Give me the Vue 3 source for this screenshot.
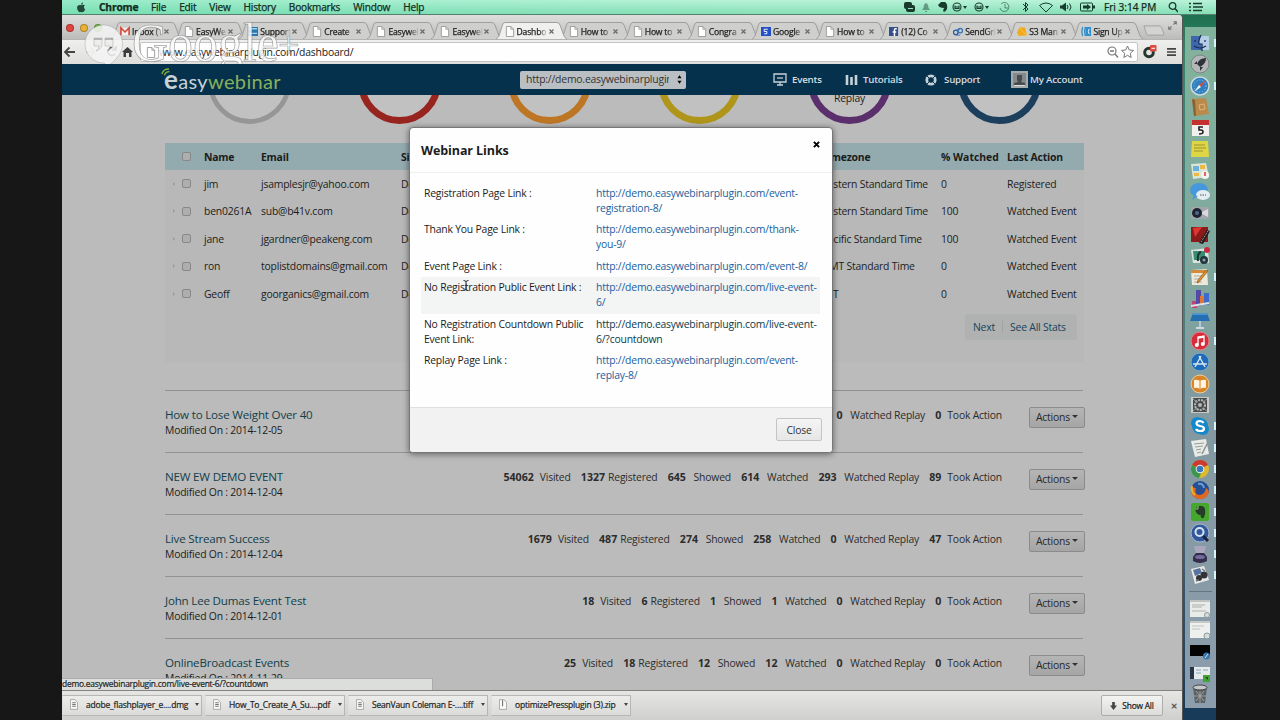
<script setup>
// macOS desktop with a Chrome window: EasyWebinar dashboard and the
// "Webinar Links" dialog on top of it.
const menus = ["File", "Edit", "View", "History", "Bookmarks", "Window", "Help"]

const page = '<path d="M1.5.5h5l3 3v8h-8z" fill="#fff" stroke="#999"/><path d="M6.5.5v3h3" fill="none" stroke="#999"/>'
const tabs = [
	{ label: "Inbox (1", icon: '<path d="M0 2h11v8H0z" fill="#eee"/><path d="M1 10V2l4.500 4.500L10 2v8" fill="none" stroke="#d24a37" stroke-width="1.800"/>' },
	{ label: "EasyWe", icon: page },
	{ label: "Support", icon: '<path d="M0 1h11v10H0z" fill="#2678b4"/><path d="M1 3h9M1 8h9" stroke="#a3d3ed" stroke-width="1.500"/>' },
	{ label: "Create", icon: page },
	{ label: "Easywel", icon: page },
	{ label: "Easywel", icon: page },
	{ label: "Dashbo", icon: page, active: true },
	{ label: "How to", icon: page },
	{ label: "How to", icon: page },
	{ label: "Congra", icon: page },
	{ label: "Google", icon: '<path d="M0 1h11v10H0z" fill="#244fc5"/><path d="M7.500 3.500h-4V6h3v2.500h-3" fill="none" stroke="#fff"/>' },
	{ label: "How to", icon: page },
	{ label: "(12) Co", icon: '<path d="M0 1h10v10H0z" fill="#344f8c"/><path d="M8.500 3H7q-1 0-1 1v7M4 6.500h4" fill="none" stroke="#fff" stroke-width="1.600"/>' },
	{ label: "SendGri", icon: '<circle cx="3" cy="7" r="2.500" fill="none" stroke="#2e5a9b" stroke-width="1.500"/><circle cx="8" cy="5" r="2.500" fill="none" stroke="#3b76b9" stroke-width="1.500"/><path d="M4 4h4M3 10h5" stroke="#3b76b9"/>' },
	{ label: "S3 Man", icon: '<path d="M3 1l6 1 2 8-9 1-2-4z" fill="#f0aa1b"/><path d="M3 1l2 4 6 5" fill="none" stroke="#ffc94b"/>' },
	{ label: "Sign Up", icon: '<path d="M5 1h6v10H5z" fill="#3191cf"/><path d="M2 1Q0 6 2 11M5 1Q3 6 5 11M9 2Q6 6 9 10" fill="none" stroke="#2b84c1" stroke-width="1.300"/><path d="M9 3Q7 6 9 9" fill="none" stroke="#fff"/>' },
]

const rings = [
	{ color: "#969696", faint: true },
	{ color: "#97241f" },
	{ color: "#bd7724" },
	{ color: "#b0951b" },
	{ color: "#5b2f6c", label: "Replay" },
	{ color: "#1d3f5e" },
]

const people = [
	{ name: "jim", email: "jsamplesjr@yahoo.com", zone: "Eastern Standard Time", watched: 0, action: "Registered" },
	{ name: "ben0261A", email: "sub@b41v.com", zone: "Eastern Standard Time", watched: 100, action: "Watched Event" },
	{ name: "jane", email: "jgardner@peakeng.com", zone: "Pacific Standard Time", watched: 100, action: "Watched Event" },
	{ name: "ron", email: "toplistdomains@gmail.com", zone: "GMT Standard Time", watched: 0, action: "Watched Event" },
	{ name: "Geoff", email: "goorganics@gmail.com", zone: "EST", watched: 0, action: "Watched Event" },
]

const statNames = ["Visited", "Registered", "Showed", "Watched", "Watched Replay", "Took Action"]
const events = [
	{ title: "How to Lose Weight Over 40", date: "2014-12-05", stats: [0, 0, 0, 0, 0, 0] },
	{ title: "NEW EW DEMO EVENT", date: "2014-12-04", stats: [54062, 1327, 645, 614, 293, 89] },
	{ title: "Live Stream Success", date: "2014-12-04", stats: [1679, 487, 274, 258, 0, 47] },
	{ title: "John Lee Dumas Event Test", date: "2014-12-01", stats: [18, 6, 1, 1, 0, 0] },
	{ title: "OnlineBroadcast Events", date: "2014-11-29", stats: [25, 18, 12, 12, 0, 0] },
]

const host = "http://demo.easywebinarplugin.com/"
const links = [
	{ label: ["Registration Page Link :"], url: [host + "event-", "registration-8/"] },
	{ label: ["Thank You Page Link :"], url: [host + "thank-", "you-9/"] },
	{ label: ["Event Page Link :"], url: [host + "event-8/"] },
	{ label: ["No Registration Public Event Link :"], url: [host + "live-event-", "6/"], striped: true },
	{ label: ["No Registration Countdown Public", "Event Link:"], url: [host + "live-event-", "6/?countdown"], hover: true },
	{ label: ["Replay Page Link :"], url: [host + "event-", "replay-8/"] },
]

const downloads = [
	"adobe_flashplayer_e....dmg",
	"How_To_Create_A_Su....pdf",
	"SeanVaun Coleman E-....tiff",
	"optimizePressplugin (3).zip",
]

// Dock icons, drawn on a 20x20 grid
const dock = [
	{ run: true, art: '<path d="M1 3h18v14H1z" fill="#3f67ad"/><path d="M11 3h8v14h-7l-1-6H9q0-5 2-8z" fill="#b5cde5"/><path d="M11 2q-3 6-2 9h3v7M5 7v2M15 7v2M4 13q6 4 12 0" fill="none" stroke="#16294f" stroke-width="1.200"/>' },
	{ art: '<circle cx="10" cy="10" r="9" fill="#b4b6b8" stroke="#7d8386"/><path d="M16 4q-7 0-9 6l3 3q6-3 6-9M7 10H4l3-3M10 13v4l3-4" fill="#303338"/>' },
	{ run: true, art: '<circle cx="10" cy="10" r="9" fill="#2f80c1" stroke="#cdd8df" stroke-width="1.500"/><circle cx="10" cy="10" r="6" fill="none" stroke="#9dcbe8" stroke-dasharray="1 2"/><path d="M16 4l-5 7-2-2z" fill="#da4b3c"/><path d="M4 16l5-7 2 2z" fill="#f2f5f7"/>' },
	{ art: '<path d="M2 2l14-1 3 16-15 2z" fill="#ba8a4d"/><path d="M2 2l3 1 1 16-2 0z" fill="#8a6030"/><path d="M9 8l5-1 1 5-5 1z" fill="none" stroke="#dab676"/>' },
	{ art: '<path d="M2 2h17v16H2z" fill="#f2f0ee"/><path d="M2 2h17v5H2z" fill="#c4302d"/><path d="M13 9H9v3h2q2 0 2 2t-4 2" fill="none" stroke="#222" stroke-width="1.600"/>' },
	{ art: '<path d="M2 2h16l1 16H1z" fill="#dfd646"/><path d="M4 6h11M4 9h12M4 12h9" stroke="#9b9130"/>' },
	{ art: '<path d="M1 3l15-1 3 14-16 2z" fill="#d8e5d7"/><path d="M3 5h6v5H3z" fill="#6db0dc"/><path d="M10 4h5v4h-5zM4 12h5v3H4z" fill="#efb840"/><circle cx="15" cy="14" r="4" fill="#f2f2f2"/><path d="M15 11v4" stroke="#d33" stroke-width="1.500"/>' },
	{ art: '<ellipse cx="9" cy="8" rx="9" ry="7" fill="#4598dc"/><ellipse cx="13" cy="13" rx="7" ry="5" fill="#e3edf3"/><path d="M4 13l-2 5 6-4" fill="#4598dc"/><path d="M10 13h6" stroke="#888" stroke-width="1.500" stroke-dasharray="1.500 1"/>' },
	{ art: '<rect x="1" y="4" width="18" height="12" rx="2" fill="#a1a6ad"/><circle cx="7" cy="10" r="5" fill="#1e2430"/><circle cx="7" cy="10" r="2" fill="#51688b"/><path d="M12 9l6-3v8l-6-3" fill="#d8dadd"/>' },
	{ art: '<path d="M1 2h17v15H1z" fill="#8b1a19"/><path d="M3 3l9-1-7 10z" fill="#dd3730"/><path d="M9 18l8-13 3 1-7 13z" fill="#241e20"/><path d="M11 17l7-11" stroke="#bbb" stroke-dasharray="1 1"/>' },
	{ art: '<path d="M1 4l17-2 1 15H3z" fill="#dce3dd"/><path d="M3 5h12v9H4z" fill="#398c75"/><path d="M8 15q-1-8 3-9" stroke="#143a30" stroke-width="2" fill="none"/><circle cx="17" cy="4" r="3" fill="#c82b41"/><circle cx="14" cy="14" r="4" fill="#26343b"/><circle cx="14" cy="14" r="1.500" fill="#79a8ae"/>' },
	{ run: true, art: '<path d="M1 3l16-1 1 16H2z" fill="#eee8d8"/><path d="M1 3h16v3H1z" fill="#d48a36"/><path d="M4 9h10M4 12h8M4 15h8" stroke="#b0aca3"/><path d="M18 4L9 15l-2 1 1-3 8-10z" fill="#e59226" stroke="#6f4b26" stroke-width=".6"/>' },
	{ art: '<path d="M2 12h5v7H2z" fill="#ba4579"/><path d="M6 1h5v16H6z" fill="#5648a6"/><path d="M10 7h4v9h-4z" fill="#df7536"/><path d="M14 4h5v12h-5z" fill="#3c6bc9"/><path d="M1 17l18-3" stroke="#dce2e5" stroke-width="2"/>' },
	{ art: '<path d="M3 3h14l3 8H0z" fill="#2570b2"/><path d="M3 4h14" stroke="#7bbce8"/><path d="M10 11v6" stroke="#b0c8d7" stroke-width="2"/><path d="M6 18h8" stroke="#e5eef2" stroke-width="1.500"/>' },
	{ run: true, art: '<circle cx="10" cy="10" r="9" fill="#d82c3a" stroke="#e88087"/><path d="M8 14V6l6-1v8M8 7l6-1" fill="none" stroke="#fff" stroke-width="1.300"/><circle cx="6.800" cy="14" r="2" fill="#fff"/><circle cx="12.800" cy="13" r="2" fill="#fff"/>' },
	{ art: '<circle cx="10" cy="10" r="9" fill="#1d6bb8" stroke="#7fa6c8"/><path d="M5 15l6-11M15 15L9 4M3 12h14" stroke="#d7e7f2" stroke-width="1.400"/>' },
	{ art: '<circle cx="10" cy="10" r="9" fill="#da8428" stroke="#ecd0a0"/><path d="M4 6q3-1 6 1 3-2 6-1v8q-3-1-6 1-3-2-6-1z" fill="#fff3df"/><path d="M10 7v8" stroke="#da8428"/>' },
	{ art: '<path d="M1 2h18v16H1z" fill="#c9cac8"/><path d="M3 3h14v14H3z" fill="#474b4c"/><circle cx="10" cy="10" r="5" fill="none" stroke="#b5b8b8" stroke-width="2" stroke-dasharray="2 1"/><circle cx="10" cy="10" r="2" fill="#b5b8b8"/><path d="M3 4l4 3M17 4l-4 3M3 16l4-3M17 16l-4-3" stroke="#999"/>' },
	{ run: true, art: '<circle cx="7" cy="7" r="6" fill="#1488cb"/><circle cx="13" cy="13" r="6" fill="#1488cb"/><circle cx="10" cy="10" r="8" fill="#1488cb"/><path d="M13.500 7q-1-2-4-2-3 .3-3 2.300T10 10q4 .5 4 2.700T10.500 15 6 13" fill="none" stroke="#fff" stroke-width="2.200"/>' },
	{ run: true, art: '<path d="M1 3l15-2 3 15-14 3z" fill="#e9ebe7"/><path d="M4 6l10-1M5 9l8-1M6 12l5-1M7 15l4-1" stroke="#949d99"/><path d="M18 4l-6 12" stroke="#8c9294" stroke-width="1.500"/>' },
	{ run: true, art: '<circle cx="10" cy="10" r="9" fill="#ddb92d"/><path d="M10 10L2 6A9 9 0 0 1 18 6z" fill="#cd3b30"/><path d="M2 6a9 9 0 0 0 7 13l3-7z" fill="#39984b"/><circle cx="10" cy="10" r="4.300" fill="#eee"/><circle cx="10" cy="10" r="3.300" fill="#3977bd"/>' },
	{ run: true, art: '<circle cx="10" cy="10" r="9" fill="#274d93"/><path d="M2 5q0 3 4 3-2 6 3 7 6 0 7-7 4 2 2 7-4 5-9 4-8-1-8-9z" fill="#df6922"/><path d="M2 6q-1 6 3 9" fill="none" stroke="#edaf31" stroke-width="2"/><path d="M8 4q5-1 6 4" stroke="#6a9bd2" stroke-width="2" fill="none"/>' },
	{ run: true, art: '<rect x="1" y="1" width="18" height="18" rx="2" fill="#45a72c"/><path d="M5 7l3-3h4q4 1 3 8-1 5-3 4t-1-3q-5 0-6-6z" fill="#283a2b"/><path d="M5 7h3V4" fill="none" stroke="#8cca7d"/>' },
	{ run: true, art: '<circle cx="10" cy="10" r="9" fill="#32599b" stroke="#a4b6d1"/><circle cx="9.500" cy="9" r="4" fill="none" stroke="#d4e4f4" stroke-width="2"/><path d="M13 13l5 5" stroke="#1b2440" stroke-width="3"/>' },
	{ run: true, art: '<path d="M4 2h12l-2 8H6z" fill="#aaa7bd"/><path d="M6 9h8l3 4v4q-7 4-14 0v-4z" fill="#342d4b"/><ellipse cx="10" cy="13" rx="5" ry="2" fill="#756aa0"/>' },
	{ run: true, art: '<path d="M1 4l13-3 5 14-14 4z" fill="#e8e9e7"/><path d="M3 5l7-2 2 5-7 3z" fill="#5874a0"/><circle cx="9" cy="13" r="3" fill="#343338"/><circle cx="14" cy="10" r="3.500" fill="#343338"/><path d="M12 4l3 2M6 16l3-1" stroke="#777" stroke-width="1.500"/>' },
]
const thumbs = [
	'<path d="M0 1h20v17H0z" fill="#e8ebe8"/><path d="M0 1h20v2H0z" fill="#bfc4c3"/><path d="M2 6h13M2 8h10M2 12h14" stroke="#adb1ad"/><circle cx="17" cy="16" r="2.500" fill="#d6dddd" stroke="#8d9899"/>',
	'<path d="M0 1h20v17H0z" fill="#edf0ed"/><path d="M0 1h20v2H0z" fill="#c4c9c8"/><path d="M2 6h12M2 9h8" stroke="#bfc4bf"/><circle cx="17" cy="16" r="3" fill="#d6dddd" stroke="#8d9899"/>',
	'<path d="M0 4h20v11H0z" fill="#030405"/><circle cx="16.500" cy="15" r="3.500" fill="#3876ad"/><path d="M15 17l3-4" stroke="#ddd"/>',
	'<path d="M0 4h20v12H0z" fill="#e6eaea"/><path d="M0 4h4v12H0z" fill="#253746"/><path d="M6 7h5M6 10h5M13 7h5" stroke="#85a8c2"/><path d="M13 12h7v7h-7z" fill="#43a437"/><path d="M15 14h3v3z" fill="#204c22"/>',
	'<path d="M3 3h14l-2 16H5z" fill="#5d6264"/><ellipse cx="10" cy="3.500" rx="7" ry="2.500" fill="#c4c8c9" stroke="#444"/><path d="M6 7l8 10M14 7L6 17M10 7v12M4 12h12" stroke="#a8adaf" stroke-width=".8"/>',
]
</script>

<template>
	<div class="stage">
		<div class="screen">
			<div class="menubar">
				<svg class="apple" viewBox="0 0 12 12"><path d="M6 3.300C4 2.300 1.300 3 1.300 6c0 3 2 6 3.500 5.600.8-.3 1.400-.3 2.200 0C8.700 12 10.600 9.500 11 8c-2-1-2-3.500-.3-4.300C9.500 2.300 7.500 2.700 6 3.300zM6 2.800C6 1.300 7 .3 8.300 0 8.500 1.500 7.500 2.700 6 2.800z" /></svg>
				<b class="app-name">Chrome</b>
				<span v-for="m in menus" :key="m" class="menu">{{ m }}</span>
				<div class="tray">
					<svg width="176" height="14" viewBox="0 0 176 14">
						<g fill="#173b2c">
							<rect x="0" y="2" width="8" height="7" rx="2" /><rect x="2" y="5" width="9" height="7" rx="2" /><path d="M4 8.500h5" stroke="#9be5c4" />
							<path d="M18 10q2-2 2-5 1-2 2-2t2 2q0 3 2 5zM21 11h2v1h-2z" opacity=".45" />
							<path d="M34 5l3-3h4q3 2 2 7-2 4-4 2l1-3q-5 0-6-3z" />
						</g>
						<g fill="none" stroke="#173b2c" stroke-width="1.100">
							<circle cx="53" cy="7" r="4" /><path d="M51 5.500v3h4v-3M51 7h4" />
							<circle cx="75" cy="7" r="4" /><path d="M73 5.500v3h4v-3M73 7h4" />
							<path d="M97 4a4.500 4.500 0 1 1-1 4M101 4v4h3" opacity=".55" stroke-width="1" />
							<path d="M119 4l5 5-2.500 2.500v-9L124 5l-5 5" stroke-width="1" />
							<path d="M135.500 5.500q6.500-5 13 0L142 12z" stroke-width="1" />
							<path d="M163 5q2 2 0 4M165.500 3.500q3 3.500 0 7" stroke-width="1" />
						</g>
						<path d="M59 6h4l-2 3zM81 6h4l-2 3zM156 5.500h2l4-3v9l-4-3h-2z" fill="#173b2c" />
					</svg>
					<svg class="battery" width="15" height="14" viewBox="0 0 15 14"><rect x=".5" y="3" width="12" height="8" rx="1" fill="none" stroke="#173b2c" /><path d="M13 5.500h2v3h-2zM3 5.500h4V4l4 3-4 3V8.500H3z" fill="#173b2c" /></svg>
					<span class="clock">Fri 3:14 PM</span>
					<svg class="lens" width="10" height="12" viewBox="0 0 10 12"><circle cx="4.500" cy="5" r="3.300" fill="none" stroke="#173b2c" stroke-width="1.300" /><path d="M7 7.500l3 3.500" stroke="#173b2c" stroke-width="1.500" /></svg>
					<svg width="14" height="10" viewBox="0 0 14 10"><path d="M0 1.500h2M4 1.500h9M0 5h2M4 5h10M0 8.500h2M4 8.500h9" stroke="#173b2c" stroke-width="1.700" /></svg>
				</div>
			</div>

			<div class="desktop">
				<div class="browser">
					<div class="tabstrip">
						<div class="lights"><i class="red"></i><i class="yellow"></i><i class="green"></i></div>
						<div v-for="(t, i) in tabs" :key="i" class="tab" :class="{ active: t.active }">
							<svg class="tab-shape" viewBox="0 0 71 17"><path d="M0 17Q2 16 3 14L6.500 3Q7 .5 9 .5H61Q63 .5 64 3L68 14Q69 16 71 17" /></svg>
							<svg class="favicon" viewBox="0 0 11 12" v-html="t.icon"></svg>
							<span class="tab-label">{{ t.label }}</span>
							<svg class="tab-close" viewBox="0 0 5 5"><path d="M.5.500l4 4M4.500.500l-4 4" stroke="#666" stroke-width="1.100" /></svg>
						</div>
						<svg class="new-tab" viewBox="0 0 24 12"><path d="M1 1h17q1 0 2 1l3 8q0 1-1 1H6q-1 0-2-1z" fill="#d3d3d1" stroke="#a0a0a0" /></svg>
						<svg class="fullscreen" viewBox="0 0 10 10"><path d="M6 .8h3.200V4M9 1L6 4M4 9.200H.8V6M1 9l3-3" fill="none" stroke="#777" stroke-width="1.300" /></svg>
					</div>

					<div class="toolbar">
						<svg class="nav" viewBox="0 0 72 20">
							<path d="M13 10H3.500M7.500 5.500L3 10l4.500 4.500" fill="none" stroke="#444" stroke-width="1.800" />
							<path d="M24 10h9M29 6l4 4-4 4" fill="none" stroke="#c2c2c2" stroke-width="1.800" />
							<path d="M53 7a4 4 0 1 0 0 5M54 4v4h-4" fill="none" stroke="#555" stroke-width="1.700" />
							<path d="M60 10l5.500-5 5.500 5h-1.500v5H67v-4h-3v4h-2.500v-5z" fill="#3c3c3c" />
						</svg>
						<div class="omnibox">
							<svg class="site-icon" viewBox="0 0 11 12" v-html="page"></svg>
							<span class="address">www.easywebinarplugin.com/dashboard/</span>
							<svg class="omni-icons" viewBox="0 0 28 14">
								<circle cx="5" cy="6" r="4" fill="none" stroke="#777" stroke-width="1.200" /><path d="M8 9l3 3.500M3 6h4" stroke="#777" stroke-width="1.300" />
								<path d="M20.500 1l1.800 4 4.200.4-3.200 2.900.9 4.200-3.700-2.200-3.700 2.200.9-4.200L14.500 5.400l4.200-.4z" fill="#fff" stroke="#777" />
							</svg>
						</div>
						<svg class="ext" viewBox="0 0 14 14"><circle cx="6" cy="7.500" r="4.300" fill="none" stroke="#25382f" stroke-width="3" /><rect x="7" y="0" width="6.500" height="6.500" rx="1" fill="#dc4a42" /><path d="M8.500 3.300h3.500" stroke="#fff" /></svg>
						<svg class="burger" viewBox="0 0 10 10"><path d="M0 1.500h10M0 5h10M0 8.500h10" stroke="#444" stroke-width="1.900" /></svg>
					</div>

					<div class="page">
						<div class="site-header">
							<div class="logo">
								<svg viewBox="0 0 10 9"><path d="M1 6Q2 1 8 1M3.500 7.500Q4 4 8.500 3.500" fill="none" stroke="#7eab3f" stroke-width="1.500" /></svg>
								<b>e</b>asy<em>webinar</em>
							</div>
							<div class="site-select"><span>http://demo.easywebinarplugin</span><svg viewBox="0 0 6 10"><path d="M3 0l2.500 3.500h-5zM3 10L.5 6.500h5z" /></svg></div>
							<div class="site-nav">
								<a class="n-events"><svg width="14" height="13" viewBox="0 0 14 13"><path d="M1 1h12v8H1zM4 12h6M7 9v3" fill="none" stroke="#c7d2d8" stroke-width="1.300" /><path d="M4 4h6v2H4z" fill="#7f98a8" /></svg>Events</a>
								<a class="n-tutorials"><svg width="13" height="12" viewBox="0 0 13 12"><path d="M2 1v10M6.500 3v8M11 1v10" stroke="#c7d2d8" stroke-width="2.600" /></svg>Tutorials</a>
								<a class="n-support"><svg width="12" height="12" viewBox="0 0 12 12"><circle cx="6" cy="6" r="4.200" fill="none" stroke="#c7d2d8" stroke-width="2.800" /><path d="M2 2l2.500 2.500M10 2L7.500 4.500M2 10l2.500-2.500M10 10L7.500 7.500" stroke="#0a3250" /></svg>Support</a>
								<a class="n-account"><svg width="17" height="17" viewBox="0 0 17 17"><path d="M0 0h17v17H0z" fill="#a5aaad" /><path d="M2 2h13v13H2z" fill="#85898b" /><path d="M6 4h5v5l-1 2 4 1v2H3v-2l4-1-1-2z" fill="#494c4d" /><path d="M3 14.500h11" stroke="#ddd" /></svg>My Account</a>
							</div>
						</div>

						<div class="rings">
							<div v-for="(r, i) in rings" :key="i" class="ring" :class="{ faint: r.faint }" :style="{ borderColor: r.color }">{{ r.label }}</div>
						</div>

						<div class="people">
							<div class="person head">
								<span class="pick"><i class="box"></i></span><span>Name</span><span>Email</span><span>Simulated</span><span>Timezone</span><span class="wide">% Watched</span><span>Last Action</span>
							</div>
							<div v-for="p in people" :key="p.name" class="person">
								<span class="pick"><i class="arrow"></i><i class="box"></i></span><span>{{ p.name }}</span><span>{{ p.email }}</span><span>December 5</span><span>{{ p.zone }}</span><span>{{ p.watched }}</span><span>{{ p.action }}</span>
							</div>
							<div class="pager"><a>Next</a><i></i><a>See All Stats</a></div>
						</div>

						<div class="events">
							<div v-for="e in events" :key="e.title" class="event">
								<div class="event-info">
									<a class="event-title">{{ e.title }}</a>
									<div class="event-date">Modified On : {{ e.date }}</div>
								</div>
								<div class="stats">
									<span v-for="(s, i) in e.stats" :key="i" class="stat" :class="'stat-' + i"><b>{{ s }}</b><span>{{ statNames[i] }}</span></span>
								</div>
								<button class="actions">Actions<i></i></button>
							</div>
						</div>
						<div class="status">demo.easywebinarplugin.com/live-event-6/?countdown</div>
					</div>

					<div class="downloads">
						<div v-for="(d, i) in downloads" :key="d" class="download">
							<svg viewBox="0 0 9 12"><path d="M.5.5h5l3 3v8h-8z" fill="#f8f8f8" stroke="#a2a2a2" /><path :d="i === 3 ? 'M4 1v7' : 'M2.500 4h4M2.500 6h4M2.500 8h4'" stroke="#777" stroke-width="1.300" /></svg>
							<span>{{ d }}</span><i></i>
						</div>
						<button class="show-all"><svg viewBox="0 0 8 9"><path d="M2.500 0h3v4H8L4 9 0 4h2.500z" fill="#444" /></svg>Show All</button>
						<span class="dismiss">×</span>
					</div>
				</div>

				<div class="dock">
					<div v-for="(d, i) in dock" :key="i" class="dock-item" :class="{ running: d.run }"><svg viewBox="0 0 20 20" v-html="d.art"></svg></div>
					<hr>
					<div v-for="(t, i) in thumbs" :key="'t' + i" class="dock-item"><svg viewBox="0 0 20 20" v-html="t"></svg></div>
				</div>
			</div>
		</div>

		<div class="modal">
			<div class="modal-head"><b>Webinar Links</b><svg viewBox="0 0 8 8"><path d="M1 1l6 6M7 1L1 7" stroke="#000" stroke-width="2.200" /></svg></div>
			<div class="modal-body">
				<div v-for="l in links" :key="l.label[0]" class="link-row" :class="{ striped: l.striped, hover: l.hover }">
					<div><div v-for="t in l.label" :key="t">{{ t }}</div></div>
					<a><div v-for="t in l.url" :key="t">{{ t }}</div></a>
				</div>
			</div>
			<div class="modal-foot"><button>Close</button></div>
			<svg class="cursor" viewBox="0 0 6 11"><path d="M.5.500Q3 .5 3 2v7q0 1.500-2.500 1.500M5.500.500Q3 .5 3 2M3 9q0 1.500 2.500 1.500" fill="none" stroke="#333" /></svg>
		</div>

		<svg class="watermark" viewBox="0 0 226 56">
			<path class="bubble" fill-rule="evenodd" d="M19.500 0a19 19 0 0 1 19 19c0 10-8 18-18 24v-5A19 19 0 0 1 19.500 0zM10 13v8h5q0 3-3 5 6-2 6-7v-6zM21 13v8h5q0 3-3 5 6-2 6-7v-6z" />
			<text x="48" y="36" textLength="147" lengthAdjust="spacingAndGlyphs">Google</text>
			<text x="194" y="33" class="plus">+</text>
		</svg>
	</div>
</template>

<style>
body {
	margin: 0;
	background: #171717;
}
</style>

<style scoped>
.stage {
	position: relative;
	width: 1280px;
	height: 720px;
	overflow: hidden;
	background: #171717;
	font-family: "Open Sans", "Noto Sans", sans-serif;
	font-size: 10.4px;
	letter-spacing: -0.2px;
	color: #1c1c1c;
}
.stage * {
	box-sizing: border-box;
}
.stage svg {
	flex: none;
}
.stage button {
	font-family: inherit;
	letter-spacing: inherit;
	padding: 0;
}
.screen {
	width: 1154px;
	height: 720px;
	margin-left: 62px;
	display: flex;
	flex-direction: column;
	overflow: hidden;
}

/* menu bar */
.menubar {
	height: 15px;
	flex: none;
	display: flex;
	align-items: center;
	padding: 0 13px 0 14px;
	background: linear-gradient(90deg, rgba(90, 220, 170, 0.35), transparent 60%), linear-gradient(#b9f3d8, #87dfb7);
	border-bottom: 1px solid #54806d;
	font-size: 10.1px;
	letter-spacing: -0.2px;
	color: #122b20;
	-webkit-text-stroke: 0.25px #122b20;
	white-space: nowrap;
}
.apple {
	width: 10px;
	height: 11px;
	margin-right: 13px;
	fill: #23493a;
}
.app-name {
	width: 52px;
	font-size: 10.3px;
}
.menu {
	margin-right: 13px;
}
.tray {
	margin-left: auto;
	display: flex;
	align-items: center;
}
.battery {
	margin: 0 9px 0 0;
}
.clock {
	width: 53px;
	margin-right: 11px;
	letter-spacing: 0;
}
.lens {
	margin-right: 11px;
}

.desktop {
	flex: 1;
	min-height: 0;
	display: flex;
	background: linear-gradient(#1d7050, #35866d 40px, #597986 420px, #183b5a 690px);
}
.browser {
	width: 1121px;
	display: flex;
	flex-direction: column;
	border-radius: 0 4px 0 0;
	overflow: hidden;
	border-right: 1px solid #555;
	background: #dcdcdc;
}

/* tabs */
.tabstrip {
	height: 25px;
	flex: none;
	display: flex;
	align-items: flex-end;
	background: linear-gradient(#dededd, #bcbcba);
	border-bottom: 1px solid #b5b5b5;
}
.lights {
	width: 49px;
	display: flex;
	gap: 6px;
	padding: 0 0 7px 4px;
}
.lights i {
	width: 8px;
	height: 8px;
	border-radius: 50%;
	border: 1px solid rgba(0, 0, 0, 0.25);
}
.red { background: #e2453f; }
.yellow { background: #eab134; }
.green { background: #7cbc4d; }
.tab {
	position: relative;
	width: 64.1px;
	height: 17px;
	flex: none;
	display: flex;
	align-items: center;
	padding: 2px 0 0 9px;
	font-size: 8.6px;
	color: #222;
	-webkit-text-stroke: 0.25px #222;
}
.tab-shape {
	position: absolute;
	left: 0;
	top: 0;
	width: 71px;
	height: 17px;
	overflow: visible;
}
.tab-shape path {
	fill: #cfcfcd;
	stroke: #989896;
	stroke-width: 0.9;
}
.tab.active {
	z-index: 1;
}
.tab.active .tab-shape path {
	fill: #f0f0ef;
}
.favicon {
	position: relative;
	width: 10px;
	height: 11px;
	margin-right: 2px;
}
.tab-label {
	position: relative;
	width: 31px;
	overflow: hidden;
	white-space: nowrap;
	mask-image: linear-gradient(90deg, #000 70%, transparent);
}
.tab-close {
	position: relative;
	width: 5px;
	height: 5px;
	margin-left: 1px;
}
.new-tab {
	width: 22px;
	height: 11px;
	margin: 0 0 3px 6px;
}
.fullscreen {
	width: 9px;
	height: 9px;
	margin: 0 0 9px 3px;
}

/* toolbar */
.toolbar {
	height: 24px;
	flex: none;
	display: flex;
	align-items: center;
	background: linear-gradient(#efefee, #dededd);
}
.nav {
	width: 72px;
	height: 20px;
	margin-right: 6px;
}
.omnibox {
	width: 998px;
	height: 20px;
	display: flex;
	align-items: center;
	padding: 0 2px 0 5px;
	background: #fdfefd;
	border: 1px solid #c4c4c4;
	border-radius: 2px;
}
.site-icon {
	width: 10px;
	height: 11px;
	margin-right: 3px;
}
.address {
	font-size: 10.4px;
	color: #222;
}
.omni-icons {
	width: 28px;
	height: 14px;
	margin-left: auto;
}
.ext {
	width: 14px;
	height: 14px;
	margin-left: 5px;
}
.burger {
	width: 9px;
	height: 10px;
	margin-left: 10px;
}

/* page, dimmed behind the dialog */
.page {
	position: relative;
	flex: 1;
	min-height: 0;
	overflow: hidden;
	background: #bbb;
}
.site-header {
	position: relative;
	z-index: 1;
	height: 31px;
	display: flex;
	align-items: center;
	background: #06314d;
	color: #d5dde2;
}
.logo {
	display: flex;
	align-items: baseline;
	width: 359px;
	margin-left: 99px;
	font-family: Lato, sans-serif;
	font-size: 20px;
	line-height: 28px;
	letter-spacing: 0.35px;
	color: #c6d2d6;
}
.logo svg {
	width: 10px;
	height: 9px;
	margin-right: -7px;
	align-self: flex-start;
	margin-top: 3px;
}
.logo b {
	font-size: 26px;
}
.logo em {
	font-style: normal;
	color: #87b05a;
}
.site-select {
	width: 166px;
	height: 18px;
	display: flex;
	align-items: center;
	justify-content: space-between;
	padding: 0 4px 1px 6px;
	border-radius: 2px;
	background: #b9bfc2;
	color: #333;
}
.site-select span {
	width: 143px;
	overflow: hidden;
	white-space: nowrap;
}
.site-select svg {
	width: 5px;
	height: 9px;
}
.site-nav {
	display: flex;
	margin-left: 87px;
	font-size: 9.7px;
	font-weight: 600;
	white-space: nowrap;
}
.site-nav a {
	display: flex;
	align-items: center;
	gap: 5px;
}
.n-events { width: 72px; }
.n-tutorials { width: 80px; }
.n-support { width: 86px; }
.site-nav .n-support { gap: 7px; }
.site-nav .n-account { gap: 2px; }

.rings {
	height: 48px;
	display: flex;
	gap: 67px;
	padding-left: 146px;
}
.ring {
	width: 83px;
	height: 83px;
	flex: none;
	margin-top: -54px;
	padding-top: 43px;
	border: 7.5px solid;
	border-radius: 50%;
	background: #c1c1c1;
	line-height: 15px;
	text-align: center;
}
.ring.faint {
	border-width: 5px;
}

.people {
	width: 919px;
	height: 219px;
	margin-left: 103px;
	background: #b8b8b8;
}
.person {
	display: grid;
	grid-template-columns: 39px 57px 140px 421px 119px 66px 77px;
	align-items: center;
	height: 27.5px;
	white-space: nowrap;
}
.person.head {
	height: 27px;
	background: #93aaae;
	font-weight: 700;
}
.person .wide {
	letter-spacing: 0;
}
.pick {
	display: flex;
	align-items: center;
	justify-content: flex-end;
	padding-right: 13px;
}
.box {
	width: 9px;
	height: 9px;
	border: 1px solid #888;
	border-radius: 2px;
	background: #aeaeae;
}
.arrow {
	margin-right: 7px;
	border: 2.5px solid transparent;
	border-left-color: #999;
	border-right-width: 0;
}
.pager {
	display: flex;
	align-items: center;
	width: 112px;
	height: 26px;
	margin: 6px 0 0 800px;
	padding: 0 8px;
	background: #b0b1b1;
	border-radius: 3px;
	color: #174460;
	white-space: nowrap;
}
.pager i {
	width: 1px;
	height: 12px;
	margin: 0 7px;
	background: #a2a2a2;
}

.events {
	width: 920px;
	margin: 28px 0 0 103px;
}
.event {
	display: flex;
	height: 62px;
	padding-top: 16px;
	background: linear-gradient(#929292, #929292) no-repeat 0 0 / 918px 1px;
	white-space: nowrap;
}
.event-title {
	display: block;
	font-size: 11.6px;
	line-height: 17px;
	color: #123f4a;
}
.event-date {
	line-height: 15px;
}
.stats {
	margin-left: auto;
	margin-right: 27px;
	padding-top: 1px;
	display: flex;
	gap: 10.2px;
	line-height: 17px;
	color: #2c2c2c;
}
.stat b {
	margin-right: 6px;
	font-size: 10.6px;
	letter-spacing: 0;
}
.stat-1 b { margin-right: 3px; }
.stat-2 b,
.stat-3 b,
.stat-4 b { margin-right: 7.7px; }
.actions {
	width: 56px;
	height: 21px;
	margin-top: 0.5px;
	border: 1px solid #8b8b8b;
	border-radius: 2px;
	background: linear-gradient(#b5b5b5, #a5a5a5);
	font-size: 10.4px;
	color: #292929;
}
.actions i {
	display: inline-block;
	margin: 0 0 3px 2px;
	border: 3px solid transparent;
	border-top-color: #333;
	border-bottom: 0;
}
.status {
	position: absolute;
	left: 0;
	bottom: 0;
	width: 371px;
	height: 12px;
	overflow: hidden;
	background: #dcdedc;
	border: 1px solid #ababab;
	border-width: 1px 1px 0 0;
	font-size: 8.4px;
	line-height: 10px;
	color: #222;
	-webkit-text-stroke: 0.2px #222;
}

/* downloads shelf */
.downloads {
	height: 30px;
	flex: none;
	display: flex;
	align-items: flex-start;
	padding-top: 4px;
	gap: 3px;
	border-top: 1px solid #828282;
	background: linear-gradient(#e6e6e5, #cfcfcd);
	font-size: 8.5px;
	color: #222;
	-webkit-text-stroke: 0.2px #222;
}
.download {
	width: 140px;
	height: 21px;
	display: flex;
	align-items: center;
	padding: 0 2px 2px 7px;
	border: 1px solid #b6b6b5;
	border-left-color: #ddd;
	background: linear-gradient(#ececeb, #dbdbda);
	white-space: nowrap;
}
.download svg {
	width: 8px;
	height: 11px;
	margin-right: 8px;
}
.download i {
	margin-left: auto;
	border: 2px solid transparent;
	border-top: 3px solid #444;
	border-bottom: 0;
}
.show-all {
	width: 62px;
	height: 21px;
	margin-left: auto;
	border: 1px solid #adadad;
	border-radius: 2px;
	background: linear-gradient(#f3f3f2, #dcdcdb);
	font-size: 8.4px;
	color: #111;
	white-space: nowrap;
}
.show-all svg {
	width: 7px;
	height: 8px;
	margin-right: 5px;
	vertical-align: -1px;
}
.dismiss {
	width: 16px;
	margin-top: 4px;
	text-align: center;
	font-size: 11px;
	line-height: 13px;
	color: #555;
}

/* dock */
.dock {
	width: 31px;
	height: 681px;
	margin: 12px 0 0 2px;
	padding-top: 6px;
	background: linear-gradient(#82b39b, #7fa89e 230px, #8299a0 380px, #8c9dad);
}
.dock-item {
	height: 21.3px;
	padding-left: 5px;
}
.dock-item svg {
	display: block;
	width: 20px;
	height: 20px;
}
.dock-item.running {
	background: linear-gradient(#d5f4fb, #d5f4fb) no-repeat right 6px / 2px 8px;
}
.dock hr {
	height: 1px;
	margin: 4px 4px 7px;
	border: 0;
	background: #66757d;
}

/* dialog */
.modal {
	position: absolute;
	left: 409px;
	top: 127px;
	width: 424px;
	height: 326px;
	display: flex;
	flex-direction: column;
	border: 1px solid #777;
	border-radius: 4px;
	overflow: hidden;
	background: #fdfefd;
	box-shadow: 0 1px 6px rgba(0, 0, 0, 0.5);
}
.modal-head {
	height: 45px;
	flex: none;
	display: flex;
	justify-content: space-between;
	padding: 13px 12px 0 11px;
	border-bottom: 1px solid #f0f0f0;
	font-size: 12.5px;
	line-height: 19px;
	letter-spacing: -0.1px;
}
.modal-head svg {
	width: 7px;
	height: 7px;
}
.modal-body {
	height: 234px;
	flex: none;
	padding: 10px 12px 0 11px;
	line-height: 15px;
	white-space: nowrap;
}
.link-row {
	display: grid;
	grid-template-columns: 172px 1fr;
	padding: 3px 0 3.4px 3px;
}
.link-row a {
	color: #1a60a0;
}
.link-row.striped {
	background: #f3f4f4;
}
.link-row.hover a {
	color: #0c3a4b;
}
.modal-foot {
	flex: 1;
	display: flex;
	justify-content: flex-end;
	padding: 10px 10px 0 0;
	border-top: 1px solid #e0e0e0;
	background: #f1f2f1;
}
.modal-foot button {
	width: 46px;
	height: 23px;
	border: 1px solid #c4c4c4;
	border-radius: 2px;
	background: linear-gradient(#f5f5f5, #e6e6e6);
	font-size: 10.4px;
	color: #333;
}
.cursor {
	position: absolute;
	left: 53px;
	top: 152px;
	width: 6px;
	height: 11px;
}

/* Hangouts watermark */
.watermark {
	position: absolute;
	left: 84px;
	top: 25px;
	width: 226px;
	height: 56px;
	overflow: visible;
}
.bubble {
	fill: rgba(245, 245, 245, 0.85);
	stroke: rgba(130, 130, 130, 0.45);
	stroke-width: 0.7;
}
.watermark text {
	font-family: "Liberation Serif", serif;
	font-size: 54px;
	letter-spacing: 0;
	fill: rgba(250, 250, 250, 0.84);
	stroke: rgba(100, 100, 100, 0.6);
	stroke-width: 0.7;
}
.watermark .plus {
	font-size: 38px;
}
</style>
